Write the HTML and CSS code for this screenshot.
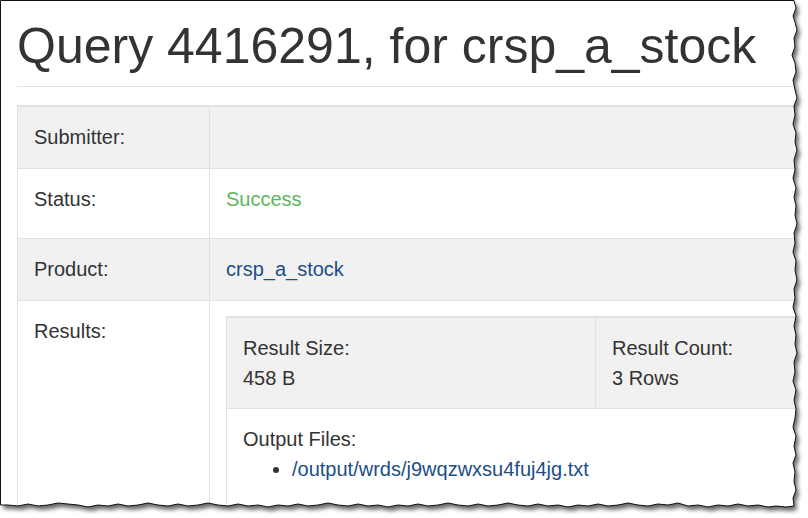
FILE: index.html
```html
<!DOCTYPE html>
<html lang="en">
<head>
<meta charset="utf-8">
<title>Query 4416291</title>
<link rel="stylesheet" href="styles.css">
</head>
<body>
<div class="page">
  <h1 class="title">Query 4416291, for crsp_a_stock</h1>
  <hr class="rule">
  <table class="info">
    <tr class="alt"><th>Submitter:</th><td></td></tr>
    <tr><th class="tall">Status:</th><td class="tall"><span class="success">Success</span></td></tr>
    <tr class="alt"><th>Product:</th><td><a class="link" href="#">crsp_a_stock</a></td></tr>
    <tr>
      <th>Results:</th>
      <td>
        <table class="results">
          <tr class="alt">
            <td class="c1"><div>Result Size:</div><div>458 B</div></td>
            <td><div>Result Count:</div><div>3 Rows</div></td>
          </tr>
          <tr>
            <td class="files-cell" colspan="2">
              <div>Output Files:</div>
              <ul class="files"><li><a class="link" href="#">/output/wrds/j9wqzwxsu4fuj4jg.txt</a></li></ul>
            </td>
          </tr>
        </table>
      </td>
    </tr>
  </table>
</div>
<svg class="torn" viewBox="0 0 808 518" width="808" height="518" aria-hidden="true">
  <defs>
    <filter id="blur" x="-5%" y="-5%" width="110%" height="110%"><feGaussianBlur stdDeviation="2"/></filter>
    <clipPath id="outside">
      <path clip-rule="evenodd" d="M0 0H808V518H0Z M0.5 0.5 L794 0.5 L796 8 L793 16 L795 22 L797 30 L794 38 L795 47 L792 55 L795 63 L796 72 L793 80 L795 90 L797 98 L794 106 L795 115 L793 124 L796 133 L795 142 L797 150 L794 160 L795 170 L793 178 L796 188 L794 197 L796 206 L795 215 L797 224 L794 233 L795 243 L793 252 L796 261 L795 270 L797 280 L794 289 L795 298 L793 307 L796 316 L794 326 L796 335 L795 344 L797 353 L794 362 L795 372 L793 381 L796 390 L794 400 L796 409 L795 418 L793 427 L796 436 L794 446 L796 455 L793 463 L795 472 L794 481 L796 490 L793 498 L794 506 L786 507 L776 506 L768 507 L758 505 L748 506 L738 504 L728 506 L718 505 L708 507 L698 505 L688 506 L678 503 L668 505 L658 504 L648 506 L638 505 L628 503 L618 505 L608 506 L598 504 L588 506 L578 505 L568 507 L558 505 L548 506 L538 504 L528 506 L518 505 L508 503 L498 505 L488 506 L478 504 L468 506 L458 505 L448 503 L438 505 L428 506 L418 504 L408 506 L398 505 L388 507 L378 505 L368 506 L358 504 L348 506 L338 505 L328 503 L318 505 L308 506 L298 504 L288 506 L278 505 L268 507 L258 505 L248 506 L238 504 L228 506 L218 505 L208 503 L198 505 L188 506 L178 504 L168 506 L158 505 L148 503 L138 505 L128 506 L118 504 L108 506 L98 505 L88 507 L78 505 L68 504 L58 503 L48 505 L38 506 L28 504 L18 506 L8 505 L0.5 505 Z"/>
    </clipPath>
  </defs>
  <path fill="#fff" fill-rule="evenodd" d="M0 0H808V518H0Z M0.5 0.5 L794 0.5 L796 8 L793 16 L795 22 L797 30 L794 38 L795 47 L792 55 L795 63 L796 72 L793 80 L795 90 L797 98 L794 106 L795 115 L793 124 L796 133 L795 142 L797 150 L794 160 L795 170 L793 178 L796 188 L794 197 L796 206 L795 215 L797 224 L794 233 L795 243 L793 252 L796 261 L795 270 L797 280 L794 289 L795 298 L793 307 L796 316 L794 326 L796 335 L795 344 L797 353 L794 362 L795 372 L793 381 L796 390 L794 400 L796 409 L795 418 L793 427 L796 436 L794 446 L796 455 L793 463 L795 472 L794 481 L796 490 L793 498 L794 506 L786 507 L776 506 L768 507 L758 505 L748 506 L738 504 L728 506 L718 505 L708 507 L698 505 L688 506 L678 503 L668 505 L658 504 L648 506 L638 505 L628 503 L618 505 L608 506 L598 504 L588 506 L578 505 L568 507 L558 505 L548 506 L538 504 L528 506 L518 505 L508 503 L498 505 L488 506 L478 504 L468 506 L458 505 L448 503 L438 505 L428 506 L418 504 L408 506 L398 505 L388 507 L378 505 L368 506 L358 504 L348 506 L338 505 L328 503 L318 505 L308 506 L298 504 L288 506 L278 505 L268 507 L258 505 L248 506 L238 504 L228 506 L218 505 L208 503 L198 505 L188 506 L178 504 L168 506 L158 505 L148 503 L138 505 L128 506 L118 504 L108 506 L98 505 L88 507 L78 505 L68 504 L58 503 L48 505 L38 506 L28 504 L18 506 L8 505 L0.5 505 Z"/>
  <g clip-path="url(#outside)">
    <path class="shadow" transform="translate(3 4)" filter="url(#blur)" d="M0.5 0.5 L794 0.5 L796 8 L793 16 L795 22 L797 30 L794 38 L795 47 L792 55 L795 63 L796 72 L793 80 L795 90 L797 98 L794 106 L795 115 L793 124 L796 133 L795 142 L797 150 L794 160 L795 170 L793 178 L796 188 L794 197 L796 206 L795 215 L797 224 L794 233 L795 243 L793 252 L796 261 L795 270 L797 280 L794 289 L795 298 L793 307 L796 316 L794 326 L796 335 L795 344 L797 353 L794 362 L795 372 L793 381 L796 390 L794 400 L796 409 L795 418 L793 427 L796 436 L794 446 L796 455 L793 463 L795 472 L794 481 L796 490 L793 498 L794 506 L786 507 L776 506 L768 507 L758 505 L748 506 L738 504 L728 506 L718 505 L708 507 L698 505 L688 506 L678 503 L668 505 L658 504 L648 506 L638 505 L628 503 L618 505 L608 506 L598 504 L588 506 L578 505 L568 507 L558 505 L548 506 L538 504 L528 506 L518 505 L508 503 L498 505 L488 506 L478 504 L468 506 L458 505 L448 503 L438 505 L428 506 L418 504 L408 506 L398 505 L388 507 L378 505 L368 506 L358 504 L348 506 L338 505 L328 503 L318 505 L308 506 L298 504 L288 506 L278 505 L268 507 L258 505 L248 506 L238 504 L228 506 L218 505 L208 503 L198 505 L188 506 L178 504 L168 506 L158 505 L148 503 L138 505 L128 506 L118 504 L108 506 L98 505 L88 507 L78 505 L68 504 L58 503 L48 505 L38 506 L28 504 L18 506 L8 505 L0.5 505 Z"/>
  </g>
  <path class="edge" d="M0.5 505 L0.5 0.5 L794 0.5 L796 8 L793 16 L795 22 L797 30 L794 38 L795 47 L792 55 L795 63 L796 72 L793 80 L795 90 L797 98 L794 106 L795 115 L793 124 L796 133 L795 142 L797 150 L794 160 L795 170 L793 178 L796 188 L794 197 L796 206 L795 215 L797 224 L794 233 L795 243 L793 252 L796 261 L795 270 L797 280 L794 289 L795 298 L793 307 L796 316 L794 326 L796 335 L795 344 L797 353 L794 362 L795 372 L793 381 L796 390 L794 400 L796 409 L795 418 L793 427 L796 436 L794 446 L796 455 L793 463 L795 472 L794 481 L796 490 L793 498 L794 506 L786 507 L776 506 L768 507 L758 505 L748 506 L738 504 L728 506 L718 505 L708 507 L698 505 L688 506 L678 503 L668 505 L658 504 L648 506 L638 505 L628 503 L618 505 L608 506 L598 504 L588 506 L578 505 L568 507 L558 505 L548 506 L538 504 L528 506 L518 505 L508 503 L498 505 L488 506 L478 504 L468 506 L458 505 L448 503 L438 505 L428 506 L418 504 L408 506 L398 505 L388 507 L378 505 L368 506 L358 504 L348 506 L338 505 L328 503 L318 505 L308 506 L298 504 L288 506 L278 505 L268 507 L258 505 L248 506 L238 504 L228 506 L218 505 L208 503 L198 505 L188 506 L178 504 L168 506 L158 505 L148 503 L138 505 L128 506 L118 504 L108 506 L98 505 L88 507 L78 505 L68 504 L58 503 L48 505 L38 506 L28 504 L18 506 L8 505 L0.5 505"/>
</svg>
</body>
</html>
```

FILE: styles.css
```css
html, body {
  margin: 0;
  padding: 0;
  background: #fff;
  overflow: hidden;
  width: 808px;
  height: 518px;
}
body {
  position: relative;
  font-family: "Liberation Sans", Arial, sans-serif;
  font-size: 20px;
  line-height: 30px;
  color: #333;
}
.page {
  padding-left: 17px;
  width: 791px;
  height: 518px;
  overflow: hidden;
}
.title {
  font-size: 50px;
  font-weight: 400;
  line-height: 1.1;
  margin: 19px 0 12px;
  color: #333;
  white-space: nowrap;
}
.rule {
  border: 0;
  border-top: 1px solid #e3e3e3;
  margin: 0 0 18px;
  height: 0;
}
.info, .results {
  border-collapse: collapse;
  border: 1px solid #dee2e6;
  border-top-width: 2px;
}
.info {
  width: 860px;
}
.results {
  width: 100%;
}
.info th, .info td {
  border: 1px solid #dee2e6;
  padding: 15px 16px 16px;
  text-align: left;
  vertical-align: top;
  font-weight: 400;
}
.info th {
  width: 159px;
}
.info .tall {
  padding-bottom: 24px;
}
.results td {
  padding: 15px 16px;
}
.results .c1 {
  width: 336px;
}
.results .files-cell {
  padding-bottom: 60px;
}
.alt > th, .alt > td {
  background: #f1f1f1;
}
.success {
  color: #5cb85c;
}
.link {
  color: #1c4e87;
  text-decoration: none;
}
.files {
  margin: 0;
  padding-left: 49px;
}
.torn {
  position: absolute;
  left: 0;
  top: 0;
  pointer-events: none;
}
.shadow {
  fill: #000;
  opacity: 0.6;
}
.edge {
  fill: none;
  stroke: #111;
  stroke-width: 1;
}
```
